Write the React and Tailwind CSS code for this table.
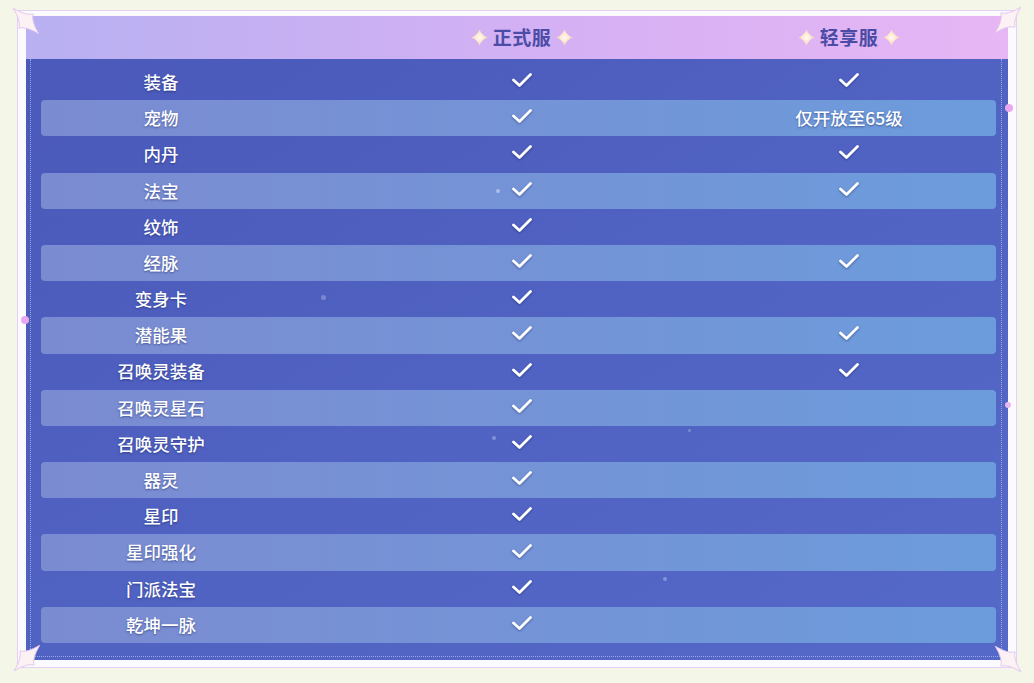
import React from 'react';

const rows = [
  ['装备', true, true],
  ['宠物', true, '仅开放至65级'],
  ['内丹', true, true],
  ['法宝', true, true],
  ['纹饰', true, false],
  ['经脉', true, true],
  ['变身卡', true, false],
  ['潜能果', true, true],
  ['召唤灵装备', true, true],
  ['召唤灵星石', true, false],
  ['召唤灵守护', true, false],
  ['器灵', true, false],
  ['星印', true, false],
  ['星印强化', true, false],
  ['门派法宝', true, false],
  ['乾坤一脉', true, false],
];

const font = { fontFamily: '"Noto Sans CJK SC", "Noto Sans", sans-serif' };

function Check() {
  return (
    <svg width="24" height="18" viewBox="0 0 24 18" className="drop-shadow-[0_1px_1px_rgba(20,30,90,0.45)] -mt-1">
      <polyline points="3.5,9 9.5,14.5 20.5,3.5" fill="none" stroke="white" strokeWidth="2.8" strokeLinecap="round" strokeLinejoin="round" />
    </svg>
  );
}

function Sparkle({ size = 17 }) {
  return (
    <svg width={size} height={size} viewBox="-10 -10 20 20">
      <defs>
        <radialGradient id="spk" cx="0.5" cy="0.5" r="0.5">
          <stop offset="0" stopColor="#fffbf4" />
          <stop offset="1" stopColor="#fbd6ae" />
        </radialGradient>
      </defs>
      <path d="M0,-9.5 Q2.6,-2.6 9.5,0 Q2.6,2.6 0,9.5 Q-2.6,2.6 -9.5,0 Q-2.6,-2.6 0,-9.5Z" fill="url(#spk)" />
    </svg>
  );
}

function CornerStar({ rotate, className }) {
  return (
    <svg width="40" height="40" viewBox="-20 -20 40 40" className={className}>
      <path
        transform={`rotate(${rotate})`}
        d="M0,-18 Q3.6,-3.6 10,0 Q3.6,3.6 0,18 Q-3.6,3.6 -10,0 Q-3.6,-3.6 0,-18Z"
        fill="#fcf1f3"
        stroke="#e2c4f1"
        strokeWidth="0.9"
      />
    </svg>
  );
}

function HeaderTitle({ children }) {
  return (
    <div className="flex items-center justify-center gap-[5px]">
      <Sparkle />
      <span className="text-[19px] font-bold text-[#4a4ca6] tracking-[0.5px]">{children}</span>
      <Sparkle />
    </div>
  );
}

export default function App() {
  return (
    <div className="w-[1034px] h-[683px] bg-[#f4f7e8] pl-[17px] pt-[10px] relative overflow-hidden" style={font}>
      <div className="relative w-[1000px] h-[658px] bg-[#fbfaff] border border-[#e6cff4] pl-[8px] pr-[8px] pt-[5px]">
        <div className="w-[982px] h-[644px] flex flex-col relative">
          {/* header */}
          <div className="h-[43px] shrink-0 flex items-center pl-[15px] bg-gradient-to-r from-[#b7b0f1] via-[#d3b0f4] to-[#e7b6f4]">
            <div className="w-[240px]" />
            <div className="w-[482px]"><HeaderTitle>正式服</HeaderTitle></div>
            <div className="w-[172px]"><HeaderTitle>轻享服</HeaderTitle></div>
          </div>

          {/* body */}
          <div className="flex-1 relative bg-gradient-to-br from-[#4a59ba] via-[#5062c2] to-[#5569c9] pt-[5px] pl-[15px] pr-[12px]">
            <div className="absolute left-[4px] right-[6px] top-0 bottom-[3px] border-l border-r border-b border-dotted border-[#b9c4f2]/70 pointer-events-none" />
            <div className="absolute left-[470px] top-[130px] w-[4px] h-[4px] rounded-full bg-white/40" />
            <div className="absolute left-[295px] top-[236px] w-[5px] h-[5px] rounded-full bg-white/25" />
            <div className="absolute left-[466px] top-[377px] w-[4px] h-[4px] rounded-full bg-white/30" />
            <div className="absolute left-[637px] top-[518px] w-[4px] h-[4px] rounded-full bg-white/30" />
            <div className="absolute left-[662px] top-[370px] w-[3px] h-[3px] rounded-full bg-white/25" />
            {rows.map(([name, a, b], i) => (
              <div
                key={name}
                className={
                  'h-[36.2px] flex items-center text-white text-[17.5px] font-medium rounded-[4px] ' +
                  (i % 2 === 1 ? 'bg-gradient-to-r from-[#7b8bd1] to-[#6c9cdc]' : '')
                }
              >
                <div className="w-[240px] text-center [text-shadow:0_1px_2px_rgba(20,30,90,0.5)]">{name}</div>
                <div className="w-[482px] flex justify-center">{a && <Check />}</div>
                <div className="w-[172px] flex justify-center [text-shadow:0_1px_2px_rgba(20,30,90,0.5)]">
                  {b === true ? <Check /> : b ? <span>{b}</span> : null}
                </div>
              </div>
            ))}
          </div>
        </div>

        {/* edge dots */}
        <div className="absolute left-[3px] top-[305px] w-[8px] h-[8px] rounded-full bg-[#e9a8ee]" />
        <div className="absolute right-[3px] top-[93px] w-[8px] h-[8px] rounded-full bg-[#e9a8ee]" />
        <div className="absolute right-[5px] top-[391px] w-[6px] h-[6px] rounded-full bg-[#e9b8f0]" />
      </div>

      {/* corner stars */}
      <CornerStar rotate={-45} className="absolute left-[6px] top-[1px]" />
      <CornerStar rotate={45} className="absolute left-[988px] top-[0px]" />
      <CornerStar rotate={45} className="absolute left-[7px] top-[638px]" />
      <CornerStar rotate={-45} className="absolute left-[988px] top-[639px]" />
    </div>
  );
}
